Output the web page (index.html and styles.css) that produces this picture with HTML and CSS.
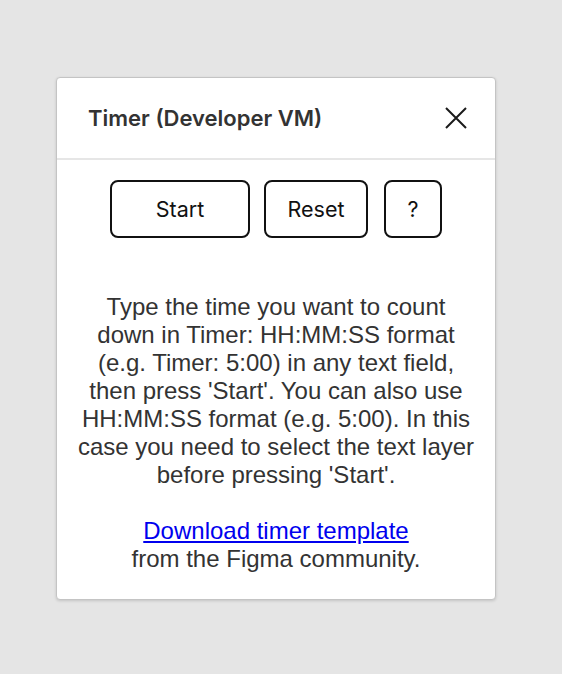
FILE: index.html
```html
<!DOCTYPE html>
<html>
<head>
<meta charset="utf-8">
<link rel="stylesheet" href="styles.css">
</head>
<body>
<div class="panel">
  <div class="header">
    <span class="title">Timer (Developer VM)</span>
    <svg class="close" width="24" height="24" viewBox="0 0 24 24"><path d="M2 2 L22 22 M22 2 L2 22" stroke="#1a1a1a" stroke-width="2" fill="none"/></svg>
  </div>
  <div class="content">
    <div class="buttons">
      <button class="btn btn-start">Start</button>
      <button class="btn btn-reset">Reset</button>
      <button class="btn btn-help">?</button>
    </div>
    <p class="info">Type the time you want to count down in Timer: HH:MM:SS format (e.g. Timer: 5:00) in any text field, then press 'Start'. You can also use HH:MM:SS format (e.g. 5:00). In this case you need to select the text layer before pressing 'Start'.</p>
    <p class="info"><a href="#">Download timer template</a><br>from the Figma community.</p>
  </div>
</div>
</body>
</html>
```
FILE: styles.css
```css
html, body { margin: 0; padding: 0; }
body {
  background: #e5e5e5;
  padding: 77px 0 0 56px;
  height: 674px;
  box-sizing: border-box;
}
.panel {
  width: 440px;
  height: 523px;
  box-sizing: border-box;
  background: #fff;
  border: 1px solid #c4c4c4;
  border-radius: 4px;
  box-shadow: 0 1px 3px rgba(0,0,0,0.15);
}
.header {
  height: 80px;
  border-bottom: 2px solid #e6e6e6;
  display: flex;
  align-items: center;
  justify-content: space-between;
  padding: 0 27px 0 31px;
}
.title {
  font-family: Inter, "Noto Sans", sans-serif;
  font-weight: 600;
  font-size: 22px;
  color: #333;
}
.close { width: 24px; height: 24px; }
.content {
  padding: 20px 0 0;
  display: flex;
  flex-direction: column;
  align-items: center;
}
.buttons {
  display: flex;
  gap: 14px;
}
.btn {
  height: 58px;
  background: #fff;
  border: 2px solid #111;
  border-radius: 8px;
  font-family: Inter, "Noto Sans", sans-serif;
  font-size: 21.5px;
  line-height: 1;
  padding: 2px 0 0;
  color: #111;
}
.btn-start { width: 140px; }
.btn-reset { width: 104px; }
.btn-help { width: 58px; margin-left: 2px; }
.info {
  width: 398px;
  font-family: "Liberation Sans", Arial, sans-serif;
  font-size: 24px;
  line-height: 28px;
  color: #333;
  text-align: center;
  margin: 0;
}
.buttons + .info { margin-top: 55px; }
.info + .info { margin-top: 28px; }
.info a { color: #0000ee; text-decoration: underline; }
```
